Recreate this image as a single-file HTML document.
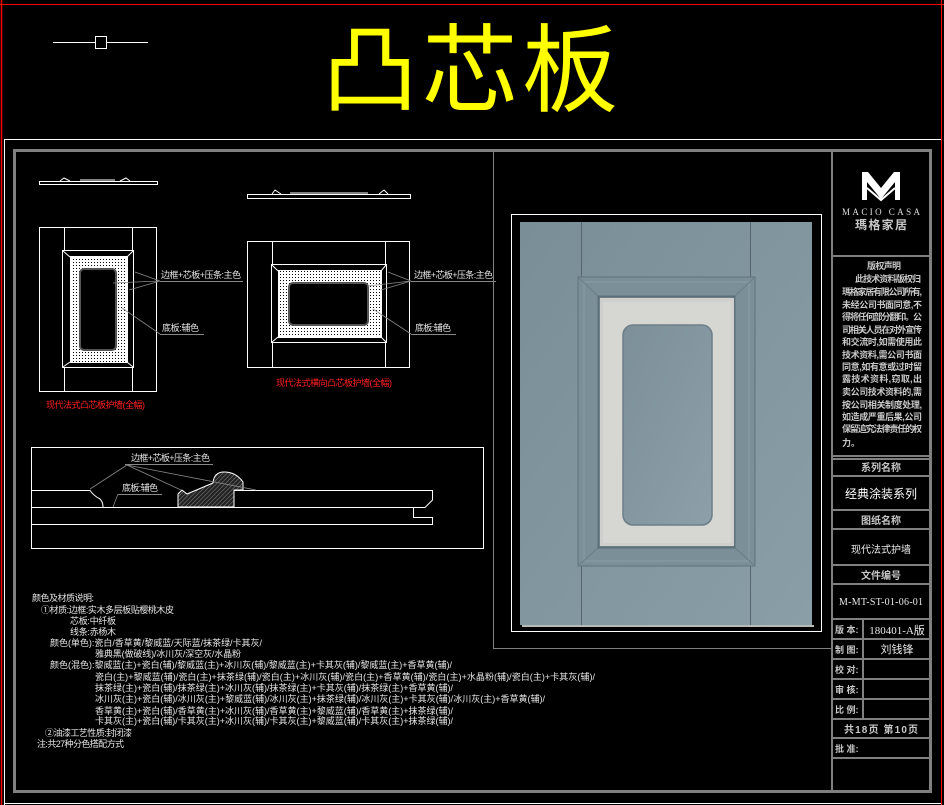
<!DOCTYPE html>
<html><head><meta charset="utf-8"><style>
html,body{margin:0;padding:0;background:#000;width:944px;height:805px;overflow:hidden}
svg{display:block}
.t{font-family:"Liberation Sans","Noto Sans CJK SC",sans-serif;fill:#e6e6e6;font-size:9px}
.r{fill:#ff2020}
.w{stroke:#fff;fill:none;stroke-width:1}
.tb{font-family:"Liberation Sans","Noto Sans CJK SC",sans-serif;fill:#c8c8c8;font-weight:bold}
</style></head><body>
<svg width="944" height="805" viewBox="0 0 944 805" xmlns="http://www.w3.org/2000/svg">
<defs>
<pattern id="dots" width="3" height="3" patternUnits="userSpaceOnUse"><rect width="3" height="3" fill="#fff"/><rect x="1" y="1" width="1" height="1" fill="#000"/></pattern>
<pattern id="hatch" width="3" height="3" patternUnits="userSpaceOnUse" patternTransform="rotate(45)"><rect width="3" height="3" fill="#222"/><line x1="0" y1="0" x2="0" y2="3" stroke="#888" stroke-width="1"/></pattern>
<linearGradient id="dg" x1="0" y1="0" x2="1" y2="1"><stop offset="0" stop-color="#7a8e97"/><stop offset="1" stop-color="#8a9ea8"/></linearGradient>
<linearGradient id="pg" x1="0" y1="0" x2="1" y2="1"><stop offset="0" stop-color="#7c9099"/><stop offset="1" stop-color="#8d9fa8"/></linearGradient>
</defs>
<line x1="0" y1="4.5" x2="944" y2="4.5" stroke="#ff0000"/>
<line x1="1.5" y1="0" x2="1.5" y2="805" stroke="#ff0000" stroke-width="1.5"/>
<line x1="941.5" y1="0" x2="941.5" y2="805" stroke="#ff0000"/>
<line x1="4" y1="139.5" x2="941" y2="139.5" stroke="#fff"/>
<line x1="4.5" y1="139" x2="4.5" y2="805" stroke="#fff"/>
<line x1="4" y1="803.5" x2="941" y2="803.5" stroke="#fff"/>
<line x1="53" y1="42.5" x2="148" y2="42.5" stroke="#fff"/>
<rect x="95.5" y="36.5" width="11" height="12" fill="#000" stroke="#fff"/>
<text x="322" y="104" font-size="96" textLength="296" lengthAdjust="spacing" fill="#ffff00" font-family="'Noto Sans CJK SC','WenQuanYi Zen Hei',sans-serif">凸芯板</text>
<rect x="14.5" y="150.5" width="916" height="641" fill="none" stroke="#808080" stroke-width="3"/>
<line x1="493.5" y1="151" x2="493.5" y2="648" stroke="#808080"/>
<line x1="493" y1="648.5" x2="832" y2="648.5" stroke="#808080"/>
<line x1="832" y1="151" x2="832" y2="791" stroke="#808080" stroke-width="2"/>

<!-- door image -->
<rect x="511.5" y="214.5" width="310" height="417" fill="none" stroke="#fff"/>
<rect x="520" y="222" width="292" height="403" fill="url(#dg)"/>
<rect x="522" y="625" width="292" height="2" fill="#b8b8b4"/>
<line x1="581.5" y1="222" x2="581.5" y2="625" stroke="#56666e"/>
<line x1="750.5" y1="222" x2="750.5" y2="625" stroke="#56666e"/>
<rect x="578" y="277" width="177" height="289" fill="#7b8f98" stroke="#5f737c"/>
<rect x="584" y="282" width="165" height="279" fill="none" stroke="#8a9ea6" stroke-width="1"/>
<path d="M579 278 L600 298 M754 278 L733 298 M579 565 L600 546 M754 565 L733 546" stroke="#6a7e87"/>
<rect x="598.5" y="296.5" width="136" height="251" fill="none" stroke="#5d7079" stroke-width="2"/>
<rect x="600" y="298" width="134" height="248" fill="#cfd0cd"/>
<rect x="603" y="302" width="128" height="241" fill="#d6d6d3"/>
<rect x="623" y="325" width="89" height="200" rx="10" fill="url(#pg)" stroke="#6c7f88" stroke-width="1.5"/>

<g class="w">
<rect x="39.5" y="181.5" width="118" height="3"/>
<path d="M60 181 L64 178 L70 181 M120 181 L126 178 L130 181 M80 180 L115 180"/>
<rect x="247.5" y="194.5" width="163" height="4"/>
<path d="M272 194 L275 190 L281 194 M379 194 L384 190 L388 194 M290 193 L368 193"/>
</g>
<g class="w">
<rect x="39.5" y="227.5" width="117" height="164"/>
<line x1="64.5" y1="228" x2="64.5" y2="250"/><line x1="132.5" y1="228" x2="132.5" y2="250"/>
<line x1="64.5" y1="368" x2="64.5" y2="391"/><line x1="132.5" y1="368" x2="132.5" y2="391"/>
</g>
<rect x="62.5" y="250.5" width="71" height="117" fill="#000" stroke="#fff"/>
<rect x="70" y="257" width="57" height="105" fill="url(#dots)"/>
<g class="w"><rect x="70.5" y="256.5" width="57" height="106"/><path d="M63 251 L70 257 M133 251 L127 257 M63 367 L70 362 M133 367 L127 362"/></g>
<rect x="80" y="269" width="36" height="81" rx="4" fill="#000" stroke="#555" stroke-width="2"/>
<g stroke="#888" stroke-width="0.8" fill="none"><path d="M160 281 L135 272 M160 281 L113 283 M160 281 L129 290 M160 334 L122 308"/></g>
<line x1="160" y1="281.5" x2="243" y2="281.5" stroke="#888"/>
<line x1="160" y1="334.5" x2="204" y2="334.5" stroke="#888"/>
<text class="t" x="161" y="278" font-size="8.5" textLength="80">边框+芯板+压条:主色</text>
<text class="t" x="162" y="331" font-size="8.5" textLength="37">底板:辅色</text>
<text class="t r" x="46" y="408" font-size="8.5" textLength="99">现代法式凸芯板护墙(全幅)</text>
<g class="w">
<rect x="247.5" y="241.5" width="162" height="126"/>
<line x1="272.5" y1="242" x2="272.5" y2="264"/><line x1="385.5" y1="242" x2="385.5" y2="264"/>
<line x1="272.5" y1="343" x2="272.5" y2="367"/><line x1="385.5" y1="343" x2="385.5" y2="367"/>
</g>
<rect x="271.5" y="264.5" width="115" height="78" fill="#000" stroke="#fff"/>
<rect x="278" y="271" width="103" height="66" fill="url(#dots)"/>
<g class="w"><rect x="278.5" y="270.5" width="103" height="67"/><path d="M272 265 L278 271 M386 265 L381 271 M272 342 L278 337 M386 342 L381 337"/></g>
<rect x="289" y="283" width="79" height="42" rx="4" fill="#000" stroke="#555" stroke-width="2"/>
<g stroke="#888" stroke-width="0.8" fill="none"><path d="M411 281 L388 272 M411 281 L368 286 M411 281 L381 290 M411 334 L373 309"/></g>
<line x1="411" y1="281.5" x2="496" y2="281.5" stroke="#888"/>
<line x1="411" y1="334.5" x2="456" y2="334.5" stroke="#888"/>
<text class="t" x="414" y="278" font-size="8.5" textLength="79">边框+芯板+压条:主色</text>
<text class="t" x="415" y="331" font-size="8.5" textLength="36">底板:辅色</text>
<text class="t r" x="276" y="386" font-size="8.5" textLength="116">现代法式横向凸芯板护墙(全幅)</text>

<rect x="31.5" y="447.5" width="452" height="101" fill="none" stroke="#fff"/>
<path d="M178 507 L178 494 L182 490 L187 494 L213 483 Q214 472 224 472 Q236 472 243 482 L243 490 L234 490 L234 507 Z" fill="url(#hatch)" stroke="#fff"/>
<g class="w">
<path d="M31 490.5 L90 490.5 Q94 496 100 499 Q103 502 103 507"/>
<path d="M31 507.5 L425 507.5"/>
<path d="M234 490.5 L432.5 490.5 L432.5 500 L425 507.5"/>
<path d="M413.5 507.5 L413.5 517.5 L432.5 517.5 L432.5 524.5 L31 524.5"/>
</g>
<g stroke="#888" stroke-width="0.8" fill="none"><path d="M127 465 L90 489 M127 465 L181 490 M127 465 L256 490 M118 494 L113 507"/></g>
<line x1="125" y1="464.5" x2="213" y2="464.5" stroke="#888"/>
<line x1="118" y1="494.5" x2="162" y2="494.5" stroke="#888"/>
<text class="t" x="131" y="461" font-size="8.5" textLength="79">边框+芯板+压条:主色</text>
<text class="t" x="122" y="491" font-size="8.5" textLength="36">底板:辅色</text>

<g class="t">
<text x="32" y="601" textLength="62">颜色及材质说明:</text>
<text x="41" y="613" textLength="133">①材质:边框:实木多层板贴樱桃木皮</text>
<text x="70" y="624" textLength="46">芯板:中纤板</text>
<text x="70" y="635" textLength="46">线条:赤杨木</text>
<text x="50" y="646" textLength="212">颜色(单色):瓷白/香草黄/黎威蓝/天际蓝/抹茶绿/卡其灰/</text>
<text x="95" y="657" textLength="146">雅典黑(做破线)/冰川灰/深空灰/水晶粉</text>
<text x="50" y="668" textLength="402">颜色(混色):黎威蓝(主)+瓷白(辅)/黎威蓝(主)+冰川灰(辅)/黎威蓝(主)+卡其灰(辅)/黎威蓝(主)+香草黄(辅)/</text>
<text x="95" y="680" textLength="500">瓷白(主)+黎威蓝(辅)/瓷白(主)+抹茶绿(辅)/瓷白(主)+冰川灰(辅)/瓷白(主)+香草黄(辅)/瓷白(主)+水晶粉(辅)/瓷白(主)+卡其灰(辅)/</text>
<text x="95" y="691" textLength="358">抹茶绿(主)+瓷白(辅)/抹茶绿(主)+冰川灰(辅)/抹茶绿(主)+卡其灰(辅)/抹茶绿(主)+香草黄(辅)/</text>
<text x="95" y="702" textLength="450">冰川灰(主)+瓷白(辅)/冰川灰(主)+黎威蓝(辅)/冰川灰(主)+抹茶绿(辅)/冰川灰(主)+卡其灰(辅)/冰川灰(主)+香草黄(辅)/</text>
<text x="95" y="714" textLength="358">香草黄(主)+瓷白(辅)/香草黄(主)+冰川灰(辅)/香草黄(主)+黎威蓝(辅)/香草黄(主)+抹茶绿(辅)/</text>
<text x="95" y="724" textLength="358">卡其灰(主)+瓷白(辅)/卡其灰(主)+冰川灰(辅)/卡其灰(主)+黎威蓝(辅)/卡其灰(主)+抹茶绿(辅)/</text>
<text x="45" y="736" textLength="87">②油漆工艺性质:封闭漆</text>
<text x="37" y="747" textLength="87">注:共27种分色搭配方式</text>
</g>

<g stroke="#808080" stroke-width="2">
<line x1="832" y1="256" x2="930" y2="256"/>
<line x1="832" y1="456" x2="930" y2="456"/>
<line x1="832" y1="459" x2="930" y2="459"/>
<line x1="832" y1="476" x2="930" y2="476"/>
<line x1="832" y1="510" x2="930" y2="510"/>
<line x1="832" y1="529" x2="930" y2="529"/>
<line x1="832" y1="565" x2="930" y2="565"/>
<line x1="832" y1="584" x2="930" y2="584"/>
<line x1="832" y1="619" x2="930" y2="619"/>
<line x1="832" y1="639" x2="930" y2="639"/>
<line x1="832" y1="659" x2="930" y2="659"/>
<line x1="832" y1="679" x2="930" y2="679"/>
<line x1="832" y1="699" x2="930" y2="699"/>
<line x1="832" y1="719" x2="930" y2="719"/>
<line x1="832" y1="738" x2="930" y2="738"/>
<line x1="832" y1="758" x2="930" y2="758"/>
<line x1="863" y1="619" x2="863" y2="719"/>
</g>
<path d="M862 172 L868 172 L881 188 L894 172 L900 172 L900 200 L895 200 L895 182 L881 199 L867 182 L867 200 L862 200 Z" fill="#fff"/>
<path d="M867 188 L881 200 L895 188" stroke="#fff" stroke-width="2" fill="none"/>
<text x="881" y="215" text-anchor="middle" font-size="9" textLength="78" fill="#ddd" font-family="'Liberation Serif',serif">MACIO CASA</text>
<text x="881" y="229" text-anchor="middle" font-size="12" textLength="52" class="tb" fill="#ddd">瑪格家居</text>
<g class="tb" font-size="9">
<text x="867" y="269" textLength="34">版权声明</text>
<text x="855" y="282" textLength="66">此技术资料版权归</text>
<text x="842" y="295" textLength="80">瑪格家居有限公司所有,</text>
<text x="842" y="308" textLength="80">未经公司书面同意,不</text>
<text x="842" y="320" textLength="80">得将任何部分翻印。公</text>
<text x="842" y="333" textLength="80">司相关人员在对外宣传</text>
<text x="842" y="345" textLength="80">和交流时,如需使用此</text>
<text x="842" y="358" textLength="80">技术资料,需公司书面</text>
<text x="842" y="370" textLength="80">同意,如有意或过时留</text>
<text x="842" y="382" textLength="80">露技术资料,窃取,出</text>
<text x="842" y="395" textLength="80">卖公司技术资料的,需</text>
<text x="842" y="408" textLength="80">按公司相关制度处理,</text>
<text x="842" y="420" textLength="80">如造成严重后果,公司</text>
<text x="842" y="432" textLength="80">保留追究法律责任的权</text>
<text x="842" y="446">力。</text>
</g>
<g class="tb" font-size="10" text-anchor="middle">
<text x="881" y="471">系列名称</text>
<text x="881" y="524">图纸名称</text>
<text x="881" y="579">文件编号</text>
</g>
<text x="881" y="498" text-anchor="middle" font-size="12" fill="#fff" font-family="'Liberation Sans','Noto Sans CJK SC',sans-serif">经典涂装系列</text>
<text x="881" y="553" text-anchor="middle" font-size="10" fill="#e8e8e8" font-family="'Liberation Sans','Noto Sans CJK SC',sans-serif">现代法式护墙</text>
<text x="881" y="605" text-anchor="middle" font-size="10" fill="#e8e8e8" textLength="84" font-family="'Liberation Serif',serif">M-MT-ST-01-06-01</text>
<g class="tb" font-size="9">
<text x="835" y="633">版 本:</text>
<text x="835" y="653">制 图:</text>
<text x="835" y="673">校 对:</text>
<text x="835" y="693">审 核:</text>
<text x="835" y="713">比 例:</text>
<text x="835" y="752">批 准:</text>
</g>
<text x="897" y="634" text-anchor="middle" font-size="11" fill="#e8e8e8" font-family="'Liberation Serif','Noto Sans CJK SC',serif">180401-A版</text>
<text x="897" y="653" text-anchor="middle" font-size="11" fill="#e8e8e8" font-family="'Liberation Sans','Noto Sans CJK SC',sans-serif">刘钱锋</text>
<text x="881" y="733" text-anchor="middle" font-size="10" class="tb" textLength="74">共18页 第10页</text>
</svg>
</body></html>
